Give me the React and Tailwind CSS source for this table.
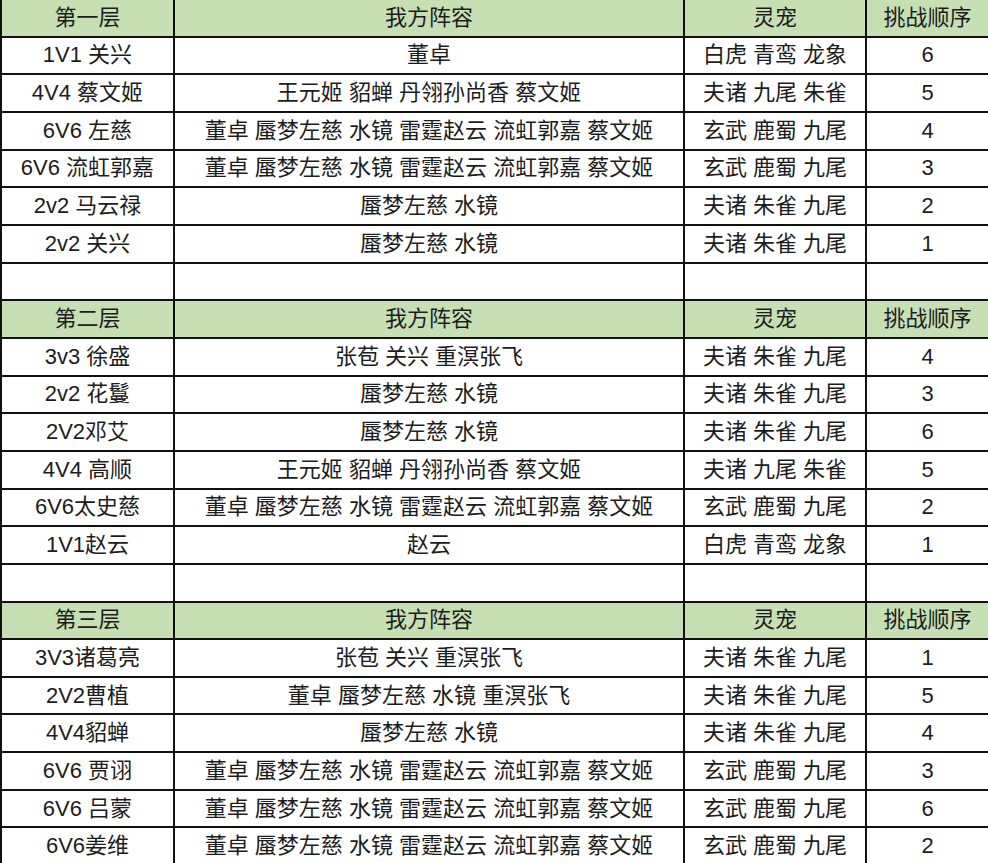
const FULL = '董卓 蜃梦左慈 水镜 雷霆赵云 流虹郭嘉 蔡文姬'

const sections = [
  {
    title: '第一层',
    rows: [
      ['1V1 关兴', '董卓', '白虎 青鸾 龙象', '6'],
      ['4V4 蔡文姬', '王元姬 貂蝉 丹翎孙尚香 蔡文姬', '夫诸 九尾 朱雀', '5'],
      ['6V6 左慈', FULL, '玄武 鹿蜀 九尾', '4'],
      ['6V6 流虹郭嘉', FULL, '玄武 鹿蜀 九尾', '3'],
      ['2v2 马云禄', '蜃梦左慈 水镜', '夫诸 朱雀 九尾', '2'],
      ['2v2 关兴', '蜃梦左慈 水镜', '夫诸 朱雀 九尾', '1'],
    ],
  },
  {
    title: '第二层',
    rows: [
      ['3v3 徐盛', '张苞 关兴 重溟张飞', '夫诸 朱雀 九尾', '4'],
      ['2v2 花鬘', '蜃梦左慈 水镜', '夫诸 朱雀 九尾', '3'],
      ['2V2邓艾', '蜃梦左慈 水镜', '夫诸 朱雀 九尾', '6'],
      ['4V4 高顺', '王元姬 貂蝉 丹翎孙尚香 蔡文姬', '夫诸 九尾 朱雀', '5'],
      ['6V6太史慈', FULL, '玄武 鹿蜀 九尾', '2'],
      ['1V1赵云', '赵云', '白虎 青鸾 龙象', '1'],
    ],
  },
  {
    title: '第三层',
    rows: [
      ['3V3诸葛亮', '张苞 关兴 重溟张飞', '夫诸 朱雀 九尾', '1'],
      ['2V2曹植', '董卓 蜃梦左慈 水镜 重溟张飞', '夫诸 朱雀 九尾', '5'],
      ['4V4貂蝉', '蜃梦左慈 水镜', '夫诸 朱雀 九尾', '4'],
      ['6V6 贾诩', FULL, '玄武 鹿蜀 九尾', '3'],
      ['6V6 吕蒙', FULL, '玄武 鹿蜀 九尾', '6'],
      ['6V6姜维', FULL, '玄武 鹿蜀 九尾', '2'],
    ],
  },
]

const Row = ({ cells, header }) => (
  <div className={`grid grid-cols-[173px_510px_182px_123px] h-[37.67px] ${header ? 'bg-[#c6e0b4]' : 'bg-white'}`}>
    {cells.map((c, i) => (
      <div
        key={i}
        className="flex items-center justify-center border-r-2 border-b-2 border-[#111] whitespace-pre"
      >
        {c}
      </div>
    ))}
  </div>
)

const App = () => {
  return (
    <div
      className="w-[988px] h-[863px] overflow-hidden bg-white text-[22px] leading-none text-[#1c1c1c]"
      style={{ fontFamily: '"Liberation Sans", "Noto Sans CJK SC", sans-serif' }}
    >
      <div className="w-[990px] border-l-2 border-[#111]">
        {sections.map((s, si) => (
          <div key={s.title}>
            <Row header cells={[s.title, '我方阵容', '灵宠', '挑战顺序']} />
            {s.rows.map((r, ri) => (
              <Row key={ri} cells={r} />
            ))}
            {si < sections.length - 1 && <Row cells={['', '', '', '']} />}
          </div>
        ))}
      </div>
    </div>
  )
}

export default App
